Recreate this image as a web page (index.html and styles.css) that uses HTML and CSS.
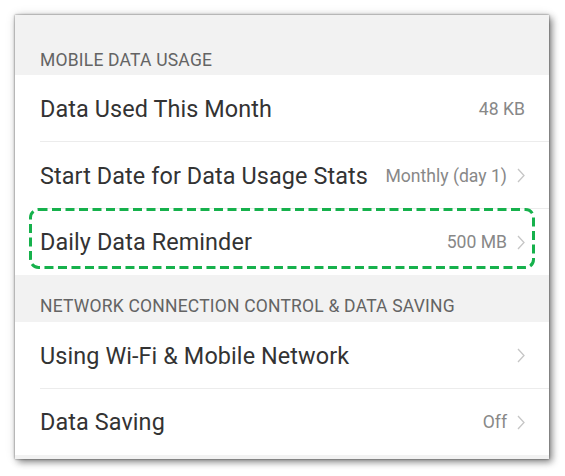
FILE: index.html
```html
<!DOCTYPE html>
<html lang="en">
<head>
<meta charset="utf-8">
<title>Data Usage</title>
<link rel="stylesheet" href="styles.css">
</head>
<body>
<div class="frame">
  <div class="card">
    <div class="section-header first">MOBILE DATA USAGE</div>
    <div class="row divided">
      <span class="title">Data Used This Month</span>
      <span class="value">48 KB</span>
    </div>
    <div class="row divided">
      <span class="title">Start Date for Data Usage Stats</span>
      <span class="trail"><span class="value">Monthly (day 1)</span><svg class="chev" viewBox="0 0 8 15" width="8" height="15"><path d="M1 1 L7 7.5 L1 14" fill="none" stroke="#c6c6c6" stroke-width="1.3"/></svg></span>
    </div>
    <div class="row highlighted">
      <span class="title">Daily Data Reminder</span>
      <span class="trail"><span class="value">500 MB</span><svg class="chev" viewBox="0 0 8 15" width="8" height="15"><path d="M1 1 L7 7.5 L1 14" fill="none" stroke="#c6c6c6" stroke-width="1.3"/></svg></span>
      <svg class="highlight" width="506" height="61" viewBox="0 0 506 61"><rect x="1.5" y="1.5" width="503" height="58" rx="8" ry="8" fill="none" stroke="#16b14c" stroke-width="3" stroke-dasharray="9 4.5"/></svg>
    </div>
    <div class="section-header">NETWORK CONNECTION CONTROL &amp; DATA SAVING</div>
    <div class="row divided">
      <span class="title">Using Wi-Fi &amp; Mobile Network</span>
      <span class="trail"><svg class="chev" viewBox="0 0 8 15" width="8" height="15"><path d="M1 1 L7 7.5 L1 14" fill="none" stroke="#c6c6c6" stroke-width="1.3"/></svg></span>
    </div>
    <div class="row">
      <span class="title">Data Saving</span>
      <span class="trail"><span class="value">Off</span><svg class="chev" viewBox="0 0 8 15" width="8" height="15"><path d="M1 1 L7 7.5 L1 14" fill="none" stroke="#c6c6c6" stroke-width="1.3"/></svg></span>
    </div>
    <div class="bottom-strip"></div>
  </div>
</div>
</body>
</html>
```

FILE: styles.css
```css
html, body {
  margin: 0;
  padding: 0;
  background: #ffffff;
}

body {
  font-family: Roboto, "Noto Sans", "Liberation Sans", sans-serif;
  width: 565px;
  height: 476px;
  overflow: hidden;
}

.frame {
  padding: 15px 16px 17px 15px;
}

.card {
  width: 534px;
  height: 444px;
  background: #ffffff;
  box-shadow: 0 0 2px rgba(0, 0, 0, 0.55), 3px 3px 7px rgba(0, 0, 0, 0.45), 0 0 10px rgba(0, 0, 0, 0.12);
  display: flex;
  flex-direction: column;
  overflow: hidden;
}

.section-header {
  background: #f2f2f2;
  color: #646464;
  font-size: 17.5px;
  line-height: 20px;
  letter-spacing: 0.2px;
  height: 47px;
  box-sizing: border-box;
  padding: 21px 25px 0 25px;
  white-space: nowrap;
}

.section-header.first {
  height: 60px;
  padding-top: 35px;
}

.row {
  position: relative;
  height: 66px;
  display: flex;
  align-items: center;
  justify-content: space-between;
  padding: 0 24px 0 25px;
  flex-shrink: 0;
}

.row.divided {
  height: 67px;
  box-sizing: border-box;
}

.row.divided::after {
  content: "";
  position: absolute;
  left: 25px;
  right: 0;
  bottom: 0;
  height: 1px;
  background: #ececec;
}

.title {
  color: #333333;
  font-size: 23.4px;
  letter-spacing: 0.1px;
  white-space: nowrap;
}

.trail {
  display: flex;
  align-items: center;
  gap: 10px;
}

.value {
  color: #888888;
  font-size: 17.6px;
  white-space: nowrap;
}

.chev {
  display: block;
}

.highlight {
  position: absolute;
  left: 14px;
  top: -1px;
  pointer-events: none;
}

.bottom-strip {
  flex: 1;
  background: #f2f2f2;
}
```
